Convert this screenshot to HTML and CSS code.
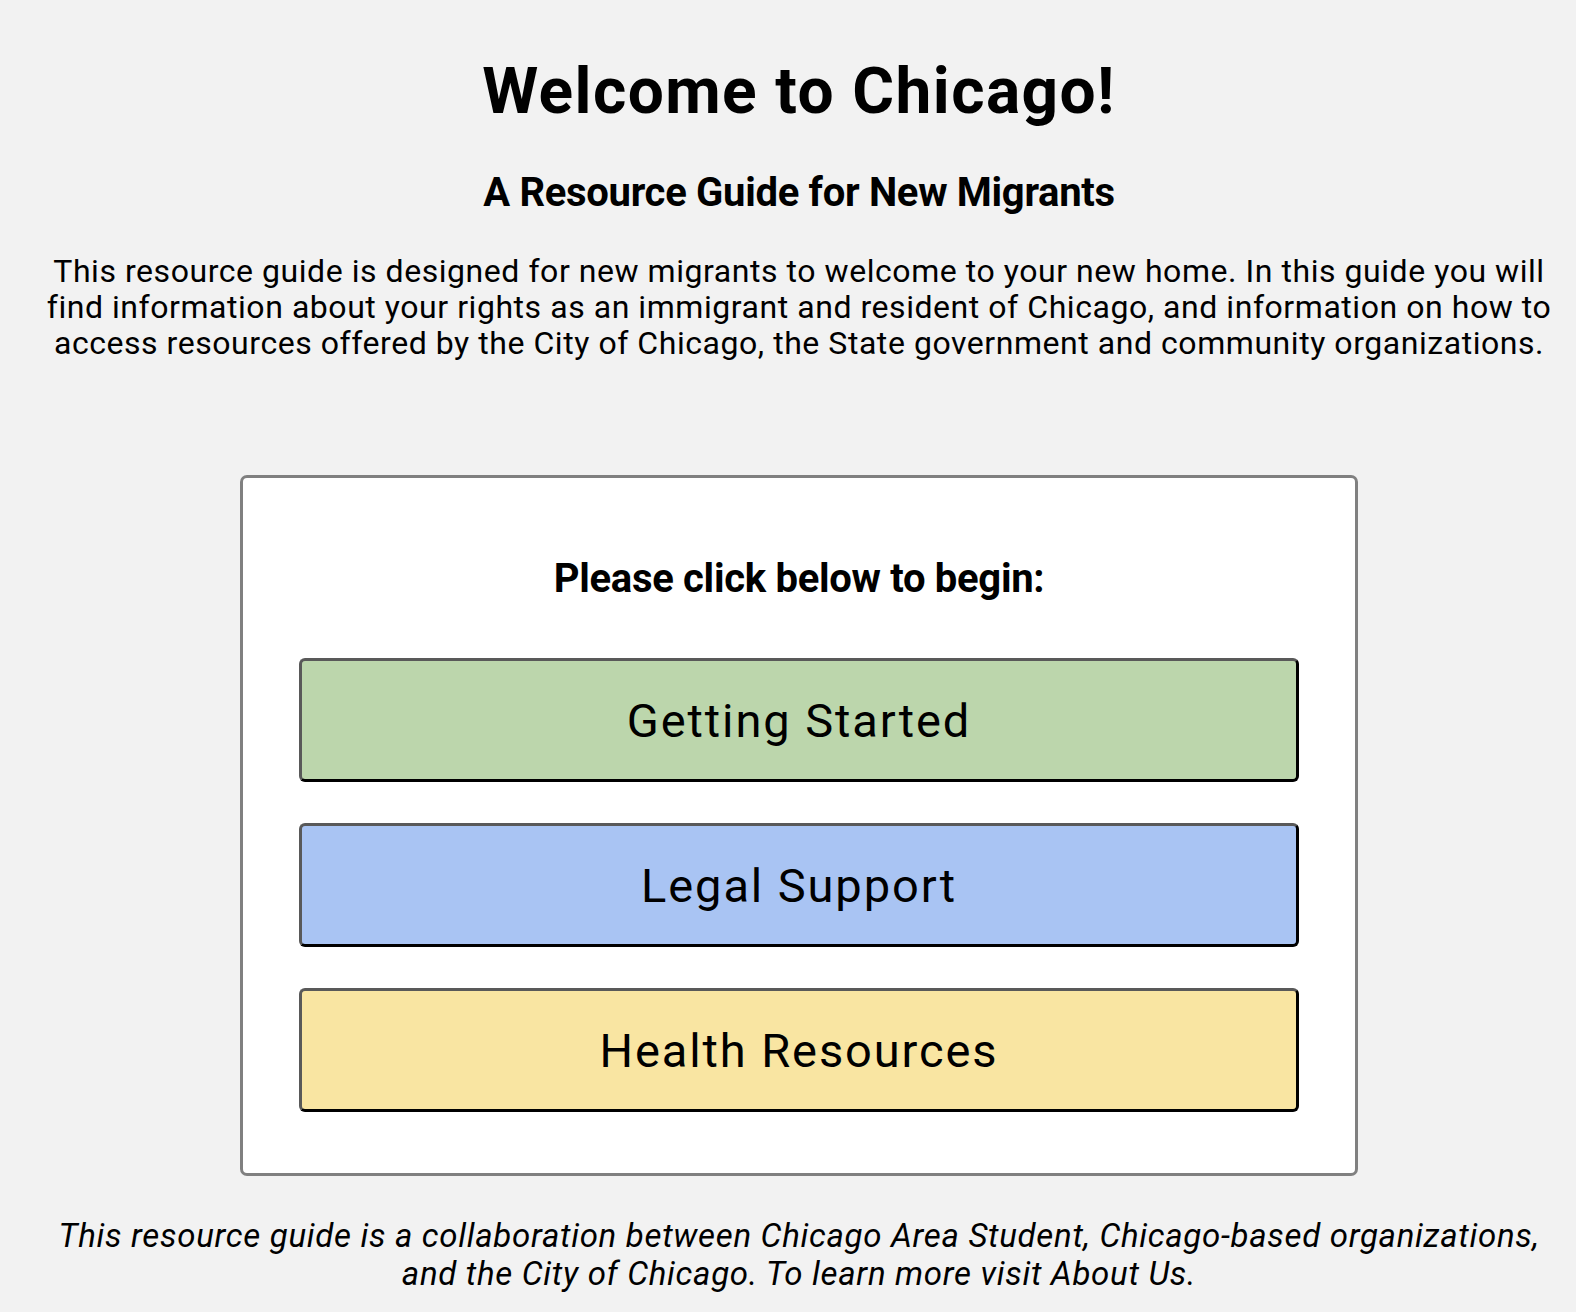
FILE: index.html
```html
<!DOCTYPE html>
<html lang="en">
<head>
<meta charset="utf-8">
<title>Welcome to Chicago!</title>
<link rel="stylesheet" href="styles.css">
</head>
<body>
<main class="page">
  <h1 class="title">Welcome to Chicago!</h1>
  <h2 class="subtitle">A Resource Guide for New Migrants</h2>
  <p class="intro">This resource guide is designed for new migrants to welcome to your new home. In this guide you will find information about your rights as an immigrant and resident of Chicago, and information on how to access resources offered by the City of Chicago, the State government and community organizations.</p>
  <section class="card">
    <h3 class="card-title">Please click below to begin:</h3>
    <div class="buttons">
      <a class="btn btn-green" href="#">Getting Started</a>
      <a class="btn btn-blue" href="#">Legal Support</a>
      <a class="btn btn-yellow" href="#">Health Resources</a>
    </div>
  </section>
  <p class="footer">This resource guide is a collaboration between Chicago Area Student, Chicago-based organizations, and the City of Chicago. To learn more visit About Us.</p>
</main>
</body>
</html>
```
FILE: styles.css
```css
html, body {
  margin: 0;
  padding: 0;
}
body {
  background: #f2f2f2;
  color: #000;
  font-family: Roboto, "Liberation Sans", sans-serif;
}
.page {
  padding: 0 0 20px 22px;
  text-align: center;
}
.title {
  font-size: 64px;
  line-height: 76px;
  font-weight: 700;
  letter-spacing: 1.4px;
  margin: 54px 0 0;
}
.subtitle {
  font-size: 40px;
  line-height: 48px;
  font-weight: 700;
  letter-spacing: -0.3px;
  margin: 39px 0 0;
}
.intro {
  font-size: 32px;
  line-height: 36px;
  letter-spacing: 0.55px;
  max-width: 1522px;
  margin: 36px auto 0;
}
.card {
  box-sizing: border-box;
  width: 1118px;
  margin: 114px auto 0;
  background: #fff;
  border: 3px solid #808080;
  border-radius: 7px;
  padding: 77px 0 61px;
}
.card-title {
  font-size: 40px;
  line-height: 48px;
  font-weight: 700;
  letter-spacing: -0.3px;
  margin: 0;
}
.buttons {
  display: flex;
  flex-direction: column;
  align-items: center;
  gap: 41px;
  margin-top: 55px;
}
.btn {
  box-sizing: border-box;
  width: 1000px;
  height: 124px;
  display: flex;
  align-items: center;
  justify-content: center;
  font-size: 47px;
  letter-spacing: 1.9px;
  color: #000;
  text-decoration: none;
  border: 3px solid;
  border-color: #595959 #000 #000 #595959;
  border-radius: 6px;
}
.btn-green { background: #bcd6ac; }
.btn-blue { background: #a9c4f3; }
.btn-yellow { background: #f9e5a2; }
.footer {
  font-size: 33px;
  line-height: 38px;
  font-style: italic;
  letter-spacing: 0.7px;
  max-width: 1500px;
  margin: 41px auto 0;
}
```
